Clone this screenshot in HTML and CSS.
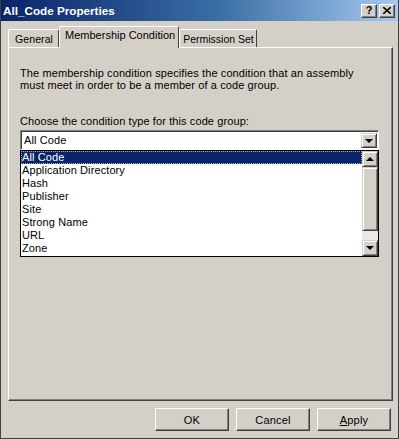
FILE: index.html
```html
<!DOCTYPE html>
<html lang="en">
  <head>
    <meta charset="UTF-8" />
    <title>All_Code Properties</title>
    <link rel="stylesheet" href="styles.css">
  </head>
  <body>
    <div class="vindue">
      <header class="titellinje">
        <span class="titel">All_Code Properties</span>
        <div class="titelknapper">
          <button class="tk">?</button>
          <button class="tk">
            <svg width="8" height="7" viewBox="0 0 8 7">
              <path d="M0 0 L8 7 M8 0 L0 7" stroke="#000" stroke-width="1.6" />
            </svg>
          </button>
        </div>
      </header>

      <div class="indhold">
        <nav class="faner">
          <div class="fane">General</div>
          <div class="fane valgt">Membership Condition</div>
          <div class="fane smal">Permission Set</div>
        </nav>

        <section class="panel">
          <p class="tekst">The membership condition specifies the condition that an assembly<br>must meet in order to be a member of a code group.</p>
          <p class="etiket">Choose the condition type for this code group:</p>

          <div class="combo">
            <span class="combotekst">All Code</span>
            <span class="pilknap"><span class="pil ned"></span></span>
          </div>

          <div class="liste">
            <ul>
              <li class="markeret">All Code</li>
              <li>Application Directory</li>
              <li>Hash</li>
              <li>Publisher</li>
              <li>Site</li>
              <li>Strong Name</li>
              <li>URL</li>
              <li>Zone</li>
            </ul>
            <div class="rullebjaelke">
              <span class="pilknap"><span class="pil op"></span></span>
              <span class="greb"></span>
              <span class="spor"></span>
              <span class="pilknap"><span class="pil ned"></span></span>
            </div>
          </div>
        </section>

        <footer class="knapper">
          <button class="knap">OK</button>
          <button class="knap">Cancel</button>
          <button class="knap"><u>A</u>pply</button>
        </footer>
      </div>
    </div>
  </body>
</html>
```

FILE: styles.css
```css
body {
  margin: 0;
  font-family: "Liberation Sans", Arial, sans-serif;
  font-size: 11px;
  color: #000;
}

.vindue {
  width: 399px;
  height: 439px;
  box-sizing: border-box;
  background-color: #d4d0c8;
  border-left: 1px solid #404040;
  border-right: 1px solid #404040;
  border-bottom: 1px solid #404040;
  display: flex;
  flex-direction: column;
}

.titellinje {
  height: 21px;
  display: flex;
  align-items: center;
  justify-content: space-between;
  padding: 0 3px 0 2px;
  background: linear-gradient(to right, #0a246a, #3a6ea5 55%, #a6caf0);
}

.titel {
  color: #fff;
  font-weight: bold;
  font-size: 11.7px;
}

.titelknapper {
  display: flex;
  gap: 2px;
}

.tk {
  width: 16px;
  height: 14px;
  padding: 0;
  margin: 0;
  background-color: #d4d0c8;
  border: 1px solid;
  border-color: #fff #404040 #404040 #fff;
  box-shadow: inset -1px -1px #808080;
  font-family: "Liberation Sans", Arial, sans-serif;
  font-weight: bold;
  font-size: 11px;
  line-height: 11px;
  display: flex;
  align-items: center;
  justify-content: center;
}

.indhold {
  flex: 1;
  padding: 5px 5px 0 7px;
  display: flex;
  flex-direction: column;
}

.faner {
  display: flex;
  align-items: flex-end;
  height: 21px;
}

.fane {
  height: 18px;
  box-sizing: border-box;
  padding: 2px 5px 0 6px;
  border: 1px solid;
  border-bottom: none;
  border-color: #fff #404040 transparent #fff;
  border-radius: 2px 2px 0 0;
  white-space: nowrap;
  line-height: 15px;
  font-size: 10.5px;
  letter-spacing: 0.1px;
}

.fane.smal {
  padding: 2px 2px 0 3px;
  letter-spacing: 0;
}

.fane.valgt {
  height: 22px;
  margin-bottom: -1px;
  background-color: #d4d0c8;
  position: relative;
  padding: 1px 3px 0 5px;
  font-size: 11px;
  letter-spacing: 0;
}

.panel {
  height: 354px;
  box-sizing: border-box;
  border: 1px solid;
  border-color: #fff #404040 #404040 #fff;
  box-shadow: inset -1px -1px #808080;
  padding: 19px 13px 0 11px;
  letter-spacing: 0.1px;
}

.tekst {
  margin: 0;
  line-height: 12px;
}

.etiket {
  margin: 24px 0 3px 0;
  line-height: 12px;
}

.combo {
  height: 20px;
  box-sizing: border-box;
  background-color: #fff;
  border: 1px solid;
  border-color: #808080 #fff #fff #808080;
  box-shadow: inset 1px 1px #404040;
  display: flex;
  align-items: stretch;
  padding: 2px 1px 1px 2px;
}

.combotekst {
  flex: 1;
  padding-left: 1px;
  line-height: 15px;
}

.pilknap {
  width: 16px;
  box-sizing: border-box;
  background-color: #d4d0c8;
  border: 1px solid;
  border-color: #d4d0c8 #404040 #404040 #d4d0c8;
  box-shadow: inset 1px 1px #fff, inset -1px -1px #808080;
  display: flex;
  align-items: center;
  justify-content: center;
}

.pil {
  width: 0;
  height: 0;
  border-left: 4px solid transparent;
  border-right: 4px solid transparent;
}

.pil.ned {
  border-top: 4px solid #000;
}

.pil.op {
  border-bottom: 4px solid #000;
}

.liste {
  height: 107px;
  box-sizing: border-box;
  background-color: #fff;
  border: 1px solid #000;
  display: flex;
}

.liste ul {
  flex: 1;
  margin: 0;
  padding: 0;
  list-style: none;
}

.liste li {
  height: 13px;
  line-height: 13px;
  padding-left: 1px;
}

.liste li.markeret {
  background-color: #0a246a;
  color: #fff;
  outline: 1px dotted #a6b2d0;
  outline-offset: -1px;
}

.rullebjaelke {
  width: 16px;
  display: flex;
  flex-direction: column;
}

.rullebjaelke .pilknap {
  height: 16px;
}

.greb {
  height: 64px;
  box-sizing: border-box;
  background-color: #d4d0c8;
  border: 1px solid;
  border-color: #d4d0c8 #404040 #404040 #d4d0c8;
  box-shadow: inset 1px 1px #fff, inset -1px -1px #808080;
}

.spor {
  flex: 1;
  background-color: #ebe9e4;
}

.knapper {
  display: flex;
  justify-content: flex-end;
  gap: 7px;
  padding: 7px 2px 0 0;
}

.knap {
  width: 74px;
  height: 23px;
  padding: 0;
  background-color: #d4d0c8;
  border: 1px solid;
  border-color: #fff #404040 #404040 #fff;
  box-shadow: inset -1px -1px #808080;
  font-family: "Liberation Sans", Arial, sans-serif;
  font-size: 11px;
  letter-spacing: 0.2px;
  color: #000;
}
```
